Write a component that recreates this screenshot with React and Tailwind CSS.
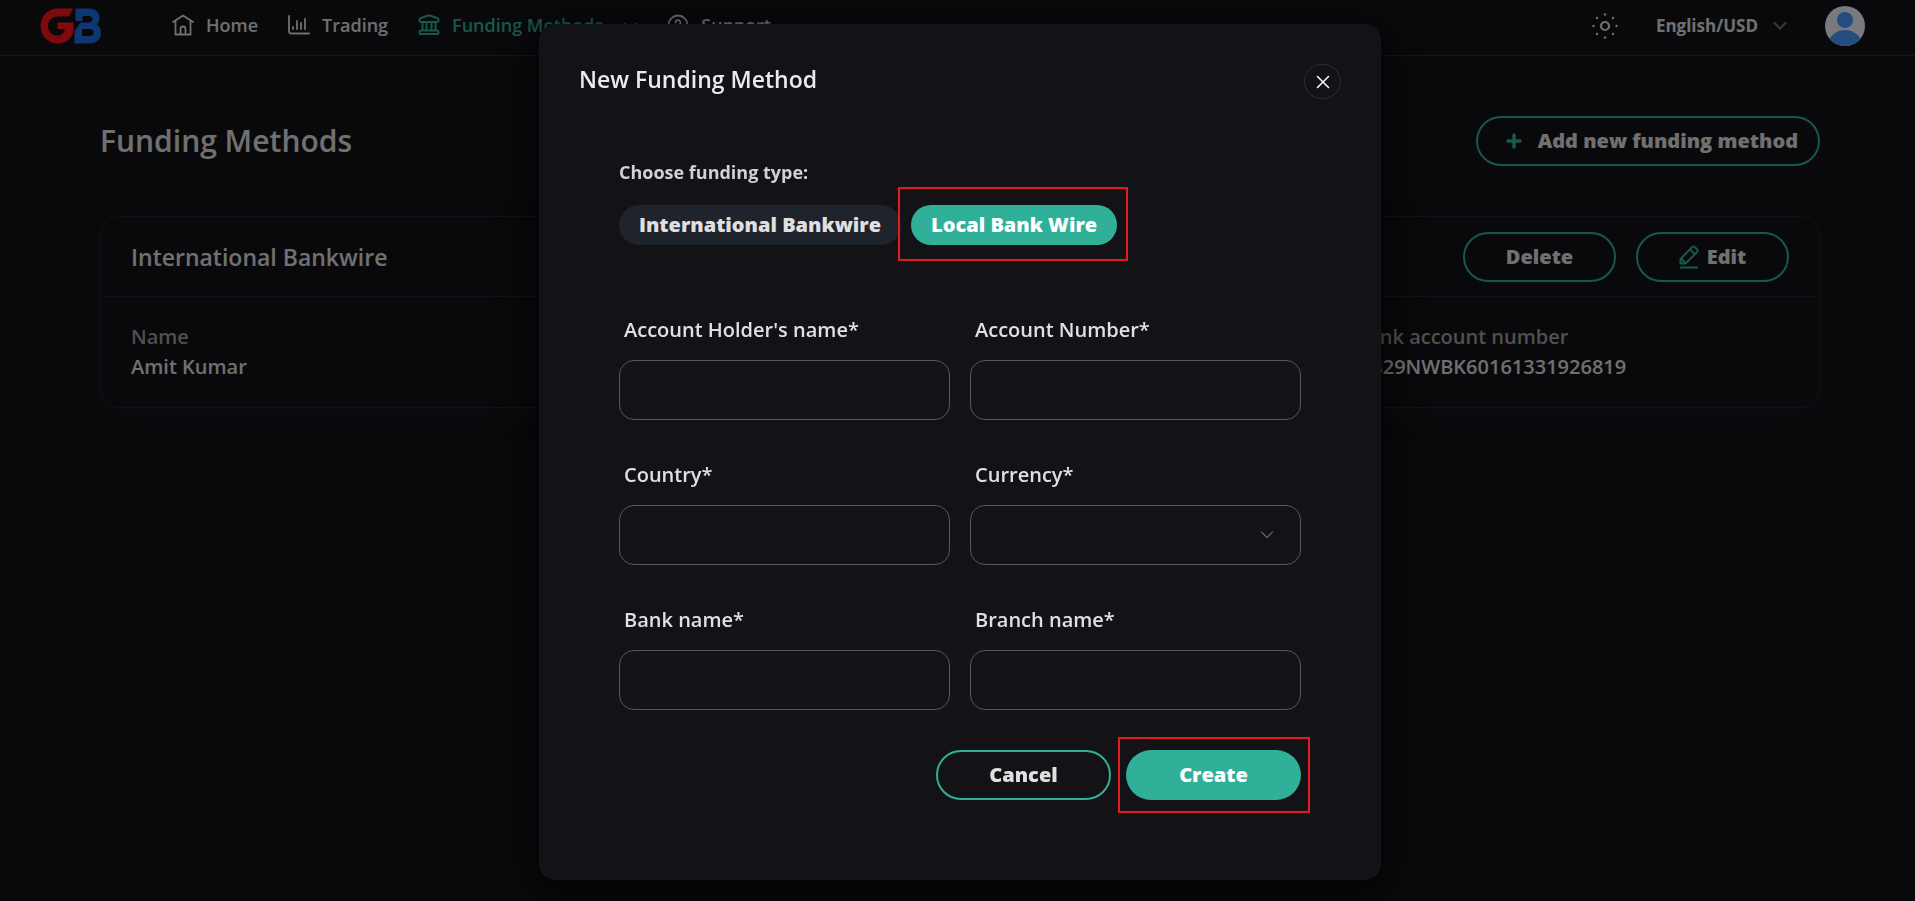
import { useState } from "react";

const fundingTypes = ["International Bankwire", "Local Bank Wire"];

const fields = [
  { id: "holder", label: "Account Holder's name*" },
  { id: "number", label: "Account Number*" },
  { id: "country", label: "Country*" },
  { id: "currency", label: "Currency*", type: "select" },
  { id: "bank", label: "Bank name*" },
  { id: "branch", label: "Branch name*" },
];

function Logo() {
  return (
    <svg width="62" height="36" viewBox="0 0 62 36" role="img" aria-label="GB">
      <path
        fill="#ff1418"
        d="M33 .5H18C8 .5 .5 8 .5 18S8 35.500 18 35.500c9 0 15.500-6.500 15.500-14.500V14.500H17.500v6.500H25c-1 4-3.500 6.500-7.500 6.500-5.500 0-9.500-4-9.500-9.500s4-9.500 9.500-9.500H29z"
      />
      <path
        fill="#1a6ce6"
        fillRule="evenodd"
        d="M35.500 .5H49c6 0 10.500 4 10.500 9 0 3-1 5.500-3 7 3 2 4.500 4.500 4.500 8.500 0 6-4.500 10.500-11 10.500H34.500V23l6-8.500H49c2 0 3.500-1 3.500-3s-1.500-3.500-3.500-3.500h-6.500v5h-7zM42 21v7h7.500c2.500 0 4-1.500 4-3.500s-1.500-3.500-4-3.500z"
      />
    </svg>
  );
}

function HomeIcon() {
  return (
    <svg width="22" height="22" viewBox="0 0 22 22" fill="none" stroke="currentColor" strokeWidth="1.800" strokeLinecap="round" strokeLinejoin="round">
      <path d="M1 8 11 1.500 21 8M3.500 6.500V20.500H18.500V6.500M8.500 20.500V15a2.500 2.500 0 0 1 5 0v5.500" />
    </svg>
  );
}

function ChartIcon() {
  return (
    <svg width="22" height="22" viewBox="0 0 22 22" fill="none" stroke="currentColor" strokeWidth="1.800" strokeLinecap="round">
      <path d="M1 2V17Q1 19.500 3.500 19.500H21M5 13V15M9 7V15M13 9V15M17 5V15" />
    </svg>
  );
}

function BankIcon() {
  return (
    <svg width="22" height="22" viewBox="0 0 22 22" fill="none" stroke="currentColor" strokeWidth="2" strokeLinejoin="round">
      <path d="M3 8Q1.500 8 1.500 6.500V5.500Q1.500 4.500 3 4L9.500 1.800Q11 1.300 12.500 1.800L19 4Q20.500 4.500 20.500 5.500V6.500Q20.500 8 19 8zM4.500 8V16.500M8.500 8V16.500M13.500 8V16.500M17.500 8V16.500" />
      <rect x="1.500" y="16.500" width="19" height="3.500" rx="1.500" />
    </svg>
  );
}

function SupportIcon() {
  return (
    <svg width="22" height="22" viewBox="0 0 22 22" fill="none" stroke="currentColor" strokeWidth="1.800" strokeLinecap="round">
      <circle cx="11" cy="11" r="9.500" />
      <path d="M8.500 8.500a2.500 2.500 0 1 1 3.500 2.500q-1 .5-1 2M11 16v.2" />
    </svg>
  );
}

function SunIcon() {
  return (
    <svg width="26" height="26" viewBox="0 0 26 26" fill="currentColor">
      <circle cx="13" cy="13" r="4" fill="none" stroke="currentColor" strokeWidth="2.200" />
      <circle cx="13" cy="1.500" r="1.200" />
      <circle cx="13" cy="24.500" r="1.200" />
      <circle cx="1.500" cy="13" r="1.200" />
      <circle cx="24.500" cy="13" r="1.200" />
      <circle cx="5" cy="5" r="1.200" />
      <circle cx="21" cy="5" r="1.200" />
      <circle cx="5" cy="21" r="1.200" />
      <circle cx="21" cy="21" r="1.200" />
    </svg>
  );
}

function Chevron({ className, strokeWidth = 1 }) {
  return (
    <svg className={className} width="14" height="8" viewBox="0 0 14 8" fill="none" stroke="currentColor" strokeWidth={strokeWidth} strokeLinecap="round">
      <path d="M1.500 1 7 6.500 12.500 1" />
    </svg>
  );
}

function EditIcon() {
  return (
    <svg width="20" height="24" viewBox="0 0 20 24" fill="none" stroke="#31b099" strokeWidth="2" strokeLinejoin="round">
      <path d="M1.500 18.500V14L13 2.200Q14.500 .8 16 2.200L18 4.200Q19.500 5.700 18 7.200L6.500 18.500zM11 4.500 16 9.500M2 13.500 7 18.500" />
      <path d="M1 22.500H19" />
    </svg>
  );
}

function Avatar() {
  return (
    <svg width="40" height="40" viewBox="0 0 40 40">
      <defs>
        <clipPath id="avatar">
          <circle cx="20" cy="20" r="20" />
        </clipPath>
      </defs>
      <g clipPath="url(#avatar)">
        <rect width="40" height="40" fill="#f3f4ff" />
        <circle cx="20" cy="14" r="8" fill="#4799ff" />
        <circle cx="20" cy="42" r="18" fill="#4799ff" />
      </g>
    </svg>
  );
}

function Header() {
  return (
    <header className="flex h-14 items-center justify-between border-b border-[#2e2e33] pr-[50px] pb-3 pl-10 text-lg leading-6 font-semibold text-[#e0e0e0]">
      <div className="flex items-center pt-2">
        <a href="#" aria-label="GB home">
          <Logo />
        </a>
        <nav className="ml-[70px] flex items-center gap-[30px] pb-px">
          <a href="#" className="flex items-center gap-3">
            <HomeIcon />
            Home
          </a>
          <a href="#" className="flex items-center gap-3">
            <ChartIcon />
            Trading
          </a>
          <a href="#" className="flex items-center gap-3 text-[#31b099]">
            <BankIcon />
            Funding Methods
            <Chevron className="mt-1 ml-2 text-[#808080]" strokeWidth={2} />
          </a>
          <a href="#" className="flex items-center gap-3">
            <SupportIcon />
            Support
          </a>
        </nav>
      </div>
      <div className="flex items-center pt-2">
        <button type="button" aria-label="Toggle theme">
          <SunIcon />
        </button>
        <button type="button" className="ml-[38px] flex items-center gap-[15px] text-[17px] font-bold">
          English/USD
          <Chevron className="text-[#707070]" strokeWidth={2} />
        </button>
        <button type="button" aria-label="Profile" className="ml-[38px]">
          <Avatar />
        </button>
      </div>
    </header>
  );
}

function FundingCard() {
  const outline = "flex h-[50px] w-[153px] items-center justify-center gap-2 rounded-full border-2 border-[#31b099] text-xl font-extrabold";
  return (
    <section className="mt-[50px] rounded-[20px] border border-[#22252b] shadow-[0_10px_20px_rgba(32,36,48,0.3)]">
      <div className="flex h-20 items-center justify-between border-b border-[#22252b] px-[30px]">
        <h2 className="text-[23px] leading-8 font-semibold">International Bankwire</h2>
        <div className="flex gap-5">
          <button type="button" className={outline}>Delete</button>
          <button type="button" className={outline}>
            <EditIcon />
            Edit
          </button>
        </div>
      </div>
      <dl className="grid grid-cols-4 py-[25px] pr-[56px] pl-[30px] text-xl leading-[30px] font-semibold">
        <div className="col-span-3">
          <dt className="text-[#a0a0a0]">Name</dt>
          <dd>Amit Kumar</dd>
        </div>
        <div>
          <dt className="text-[#a0a0a0]">Bank account number</dt>
          <dd>GB29NWBK60161331926819</dd>
        </div>
      </dl>
    </section>
  );
}

function Field({ id, label, type }) {
  const box = "h-[60px] w-full rounded-[15px] border border-[#56565b] bg-transparent px-5 text-lg outline-none";
  return (
    <div>
      <label htmlFor={id} className="mb-4 block px-[5px] text-xl leading-7 font-semibold">
        {label}
      </label>
      {type === "select" ? (
        <div className="relative">
          <select id={id} className={`${box} appearance-none`} />
          <Chevron className="pointer-events-none absolute top-[26px] right-[27px] text-[#a0a0a0]" />
        </div>
      ) : (
        <input id={id} type="text" className={box} />
      )}
    </div>
  );
}

function FundingModal() {
  const [selected, setSelected] = useState("Local Bank Wire");

  return (
    <div role="dialog" aria-labelledby="modal-title" className="w-full max-w-[842px] rounded-2xl bg-[#121217] px-10 pt-10 pb-20 shadow-[0_10px_40px_rgba(0,0,0,0.8)]">
      <div className="flex items-start justify-between">
        <h2 id="modal-title" className="text-[23px] leading-[30px] font-semibold text-[#e8eaf6]">New Funding Method</h2>
        <button type="button" aria-label="Close" className="flex h-[35px] w-[37px] items-center justify-center rounded-full border border-[#2a3038] text-white">
          <svg width="14" height="14" viewBox="0 0 14 14" stroke="currentColor" strokeWidth="1.500" strokeLinecap="round">
            <path d="M1.500 1.500 12.500 12.500M12.500 1.500 1.500 12.500" />
          </svg>
        </button>
      </div>

      <form className="mt-[61px] px-10" onSubmit={(e) => e.preventDefault()}>
        <p className="text-lg leading-6 font-bold text-[#cdd1dc]">Choose funding type:</p>
        <div className="mt-[21px] flex gap-[10px]">
          {fundingTypes.map((type) => (
            <div key={type} className="relative">
              <button
                type="button"
                onClick={() => setSelected(type)}
                className={`h-10 rounded-full px-5 text-xl font-extrabold whitespace-nowrap ${selected === type ? "bg-[#31b099] text-white" : "bg-[#1f232b]"}`}
              >
                {type}
              </button>
              {selected === type && (
                <span className="pointer-events-none absolute -top-[18px] -right-[11px] -bottom-4 -left-[13px] border-2 border-[#e31b1b]" />
              )}
            </div>
          ))}
        </div>

        <div className="mt-[71px] grid grid-cols-2 gap-x-5 gap-y-[41px]">
          {fields.map((field) => (
            <Field key={field.id} {...field} />
          ))}
        </div>

        <div className="mt-10 flex justify-end gap-[15px] text-xl font-extrabold">
          <button type="button" className="h-[50px] w-[175px] rounded-full border-2 border-[#31b099]">Cancel</button>
          <div className="relative">
            <button type="submit" className="h-[50px] w-[175px] rounded-full bg-[#31b099] text-white">Create</button>
            <span className="pointer-events-none absolute -top-[13px] -right-[9px] -bottom-[13px] -left-[8px] border-2 border-[#e31b1b]" />
          </div>
        </div>
      </form>
    </div>
  );
}

export default function App() {
  return (
    <div className="min-h-screen bg-[#121217] font-['Open_Sans',sans-serif] text-[#e0e0e0]">
      <Header />
      <main className="pt-[60px] pr-[95px] pl-[100px]">
        <div className="flex items-center justify-between">
          <h1 className="text-3xl font-semibold">Funding Methods</h1>
          <button type="button" className="flex h-[50px] items-center gap-4 rounded-full border-2 border-[#31b099] pr-5 pl-7 text-xl font-extrabold">
            <svg width="16" height="16" viewBox="0 0 16 16" stroke="#31b099" strokeWidth="3.500" strokeLinecap="round">
              <path d="M8 2V14M2 8H14" />
            </svg>
            Add new funding method
          </button>
        </div>
        <FundingCard />
      </main>

      <div className="fixed inset-0 flex items-start justify-center overflow-hidden bg-black/50 pt-6 pl-[5px]">
        <FundingModal />
      </div>
    </div>
  );
}
